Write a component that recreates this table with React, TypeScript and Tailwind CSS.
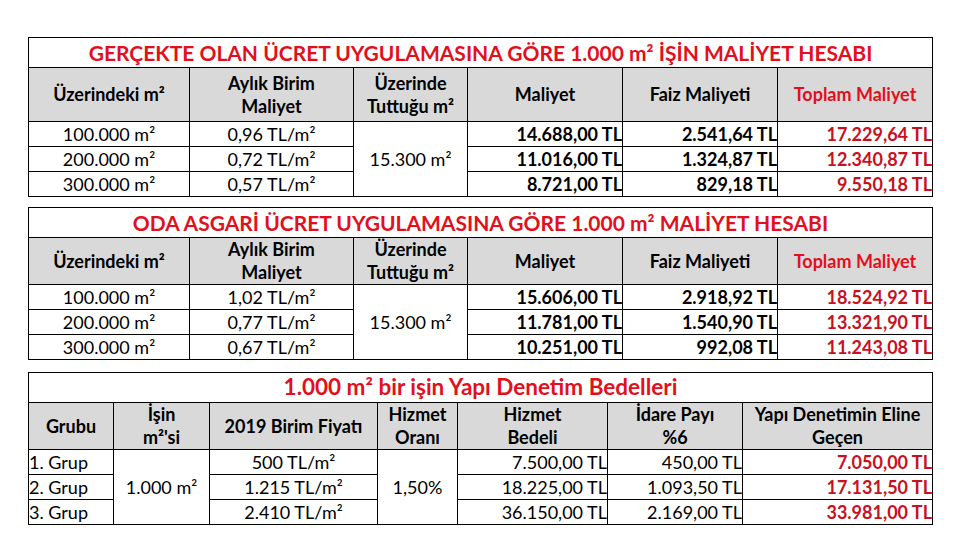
import React from "react";

const font = { fontFamily: "Lato, 'Open Sans', sans-serif" };

const B = "border border-black p-0";

function CostTable({
  title,
  headerH,
  rows,
  titleClass,
}: {
  title: React.ReactNode;
  headerH: string;
  rows: { a: string; b: string; m: string; f: string; t: string }[];
  titleClass: string;
}) {
  return (
    <table className="w-[904px] table-fixed border-collapse">
      <colgroup>
        <col className="w-[161px]" />
        <col className="w-[164px]" />
        <col className="w-[114px]" />
        <col className="w-[155px]" />
        <col className="w-[155px]" />
        <col className="w-[155px]" />
      </colgroup>
      <tbody>
        <tr>
          <td colSpan={6} className={`${B} h-[30px] text-center font-bold text-[#e2101c] ${titleClass} leading-none`}>
            {title}
          </td>
        </tr>
        <tr className="bg-[#d9d9d9] text-[18px] font-bold leading-[23px] text-black">
          <td className={`${B} ${headerH} text-center`}>Üzerindeki m²</td>
          <td className={`${B} text-center`}>
            Aylık Birim
            <br />
            Maliyet
          </td>
          <td className={`${B} text-center`}>
            Üzerinde
            <br />
            Tuttuğu m²
          </td>
          <td className={`${B} text-center`}>Maliyet</td>
          <td className={`${B} text-center`}>Faiz Maliyeti</td>
          <td className={`${B} text-center text-[#e2101c]`}>Toplam Maliyet</td>
        </tr>
        {rows.map((r, i) => (
          <tr key={i} className="text-[18px] leading-[22px]">
            <td className={`${B} h-[25px] text-center`}>{r.a}</td>
            <td className={`${B} text-center`}>{r.b}</td>
            {i === 0 && (
              <td rowSpan={3} className={`${B} text-center`}>
                15.300 m²
              </td>
            )}
            <td className={`${B} text-right font-bold`}>{r.m}</td>
            <td className={`${B} text-right font-bold`}>{r.f}</td>
            <td className={`${B} text-right font-bold text-[#c8101e]`}>{r.t}</td>
          </tr>
        ))}
      </tbody>
    </table>
  );
}

const t1 = [
  { a: "100.000 m²", b: "0,96 TL/m²", m: "14.688,00 TL", f: "2.541,64 TL", t: "17.229,64 TL" },
  { a: "200.000 m²", b: "0,72 TL/m²", m: "11.016,00 TL", f: "1.324,87 TL", t: "12.340,87 TL" },
  { a: "300.000 m²", b: "0,57 TL/m²", m: "8.721,00 TL", f: "829,18 TL", t: "9.550,18 TL" },
];
const t2 = [
  { a: "100.000 m²", b: "1,02 TL/m²", m: "15.606,00 TL", f: "2.918,92 TL", t: "18.524,92 TL" },
  { a: "200.000 m²", b: "0,77 TL/m²", m: "11.781,00 TL", f: "1.540,90 TL", t: "13.321,90 TL" },
  { a: "300.000 m²", b: "0,67 TL/m²", m: "10.251,00 TL", f: "992,08 TL", t: "11.243,08 TL" },
];

const t3 = [
  { g: "1. Grup", p: "500 TL/m²", h: "7.500,00 TL", i: "450,00 TL", y: "7.050,00 TL" },
  { g: "2. Grup", p: "1.215 TL/m²", h: "18.225,00 TL", i: "1.093,50 TL", y: "17.131,50 TL" },
  { g: "3. Grup", p: "2.410 TL/m²", h: "36.150,00 TL", i: "2.169,00 TL", y: "33.981,00 TL" },
];

export default function App() {
  return (
    <div className="w-[960px] h-[540px] bg-white text-black" style={font}>
      <div className="flex flex-col pl-[28px] pt-[37px]">
        <CostTable
          title="GERÇEKTE OLAN ÜCRET UYGULAMASINA GÖRE 1.000 m² İŞİN MALİYET HESABI"
          headerH="h-[54px]"
          rows={t1}
          titleClass="text-[21px]"
        />
        <div className="h-[10px]" />
        <CostTable
          title="ODA ASGARİ ÜCRET UYGULAMASINA GÖRE 1.000 m² MALİYET HESABI"
          headerH="h-[47px]"
          rows={t2}
          titleClass="text-[21px]"
        />
        <div className="h-[12px]" />
        <table className="w-[904px] table-fixed border-collapse">
          <colgroup>
            <col className="w-[85px]" />
            <col className="w-[96px]" />
            <col className="w-[168px]" />
            <col className="w-[80px]" />
            <col className="w-[150px]" />
            <col className="w-[135px]" />
            <col className="w-[190px]" />
          </colgroup>
          <tbody>
            <tr>
              <td colSpan={7} className={`${B} h-[30px] text-center text-[22.5px] font-bold leading-none text-[#e2101c]`}>
                1.000 m² bir işin Yapı Denetim Bedelleri
              </td>
            </tr>
            <tr className="bg-[#d9d9d9] text-[18px] font-bold leading-[23px]">
              <td className={`${B} h-[47px] text-center`}>Grubu</td>
              <td className={`${B} text-center`}>
                İşin
                <br />
                m²'si
              </td>
              <td className={`${B} text-center`}>2019 Birim Fiyatı</td>
              <td className={`${B} text-center`}>
                Hizmet
                <br />
                Oranı
              </td>
              <td className={`${B} text-center`}>
                Hizmet
                <br />
                Bedeli
              </td>
              <td className={`${B} text-center`}>
                İdare Payı
                <br />
                %6
              </td>
              <td className={`${B} text-center`}>
                Yapı Denetimin Eline
                <br />
                Geçen
              </td>
            </tr>
            {t3.map((r, i) => (
              <tr key={i} className="text-[18px] leading-[22px]">
                <td className={`${B} h-[25px] text-left`}>{r.g}</td>
                {i === 0 && (
                  <td rowSpan={3} className={`${B} text-center`}>
                    1.000 m²
                  </td>
                )}
                <td className={`${B} text-center`}>{r.p}</td>
                {i === 0 && (
                  <td rowSpan={3} className={`${B} text-center`}>
                    1,50%
                  </td>
                )}
                <td className={`${B} text-right`}>{r.h}</td>
                <td className={`${B} text-right`}>{r.i}</td>
                <td className={`${B} text-right font-bold text-[#c8101e]`}>{r.y}</td>
              </tr>
            ))}
          </tbody>
        </table>
      </div>
    </div>
  );
}
